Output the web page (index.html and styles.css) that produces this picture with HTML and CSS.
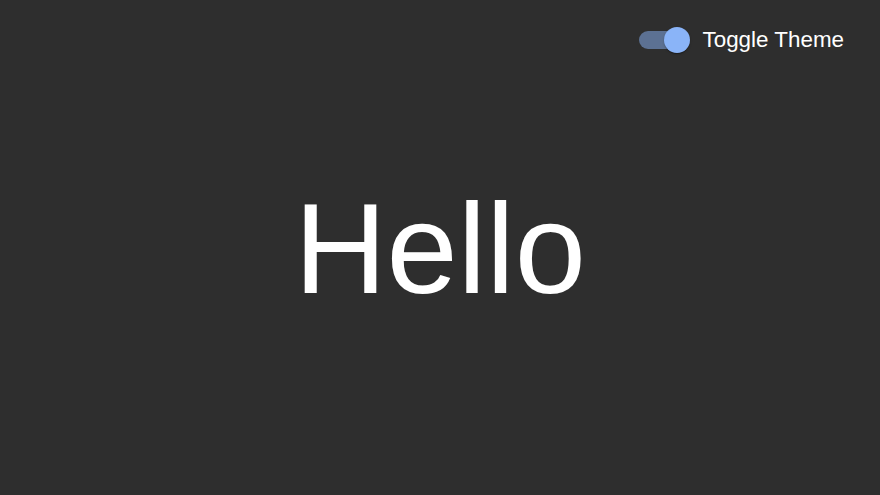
FILE: index.html
```html
<!DOCTYPE html>
<html>
<head>
<meta charset="utf-8">
<link rel="stylesheet" href="styles.css">
</head>
<body>
<div class="page">
  <header class="toolbar">
    <label class="toggle">
      <span class="switch">
        <span class="track"></span>
        <span class="thumb"></span>
      </span>
      <span class="label">Toggle Theme</span>
    </label>
  </header>
  <main class="main">
    <h1 class="hello">Hello</h1>
  </main>
</div>
</body>
</html>
```

FILE: styles.css
```css
html, body {
  margin: 0;
  padding: 0;
}
body {
  background: #2e2e2e;
  color: #ffffff;
  font-family: "Liberation Sans", Arial, sans-serif;
}
.page {
  height: 495px;
  display: flex;
  flex-direction: column;
}
.toolbar {
  display: flex;
  justify-content: flex-end;
  padding: 21px 36px 0 0;
}
.toggle {
  display: flex;
  align-items: center;
  gap: 12px;
  height: 38px;
}
.switch {
  position: relative;
  width: 52px;
  height: 26px;
  display: block;
}
.track {
  position: absolute;
  left: 0;
  top: 4px;
  width: 44px;
  height: 18px;
  border-radius: 9px;
  background: #8ab4f8;
  opacity: 0.5;
}
.thumb {
  position: absolute;
  left: 25px;
  top: 0;
  width: 26px;
  height: 26px;
  border-radius: 50%;
  background: #8ab4f8;
  box-shadow: 0 2px 1px -1px rgba(0,0,0,0.2), 0 1px 1px 0 rgba(0,0,0,0.14), 0 1px 3px 0 rgba(0,0,0,0.12);
}
.label {
  font-size: 22.4px;
  line-height: 1.5;
}
.main {
  flex: 1;
  display: flex;
  justify-content: center;
  align-items: center;
  padding-bottom: 56px;
}
.hello {
  margin: 0;
  font-weight: 400;
  font-size: 128px;
  line-height: 1.2;
}
```
